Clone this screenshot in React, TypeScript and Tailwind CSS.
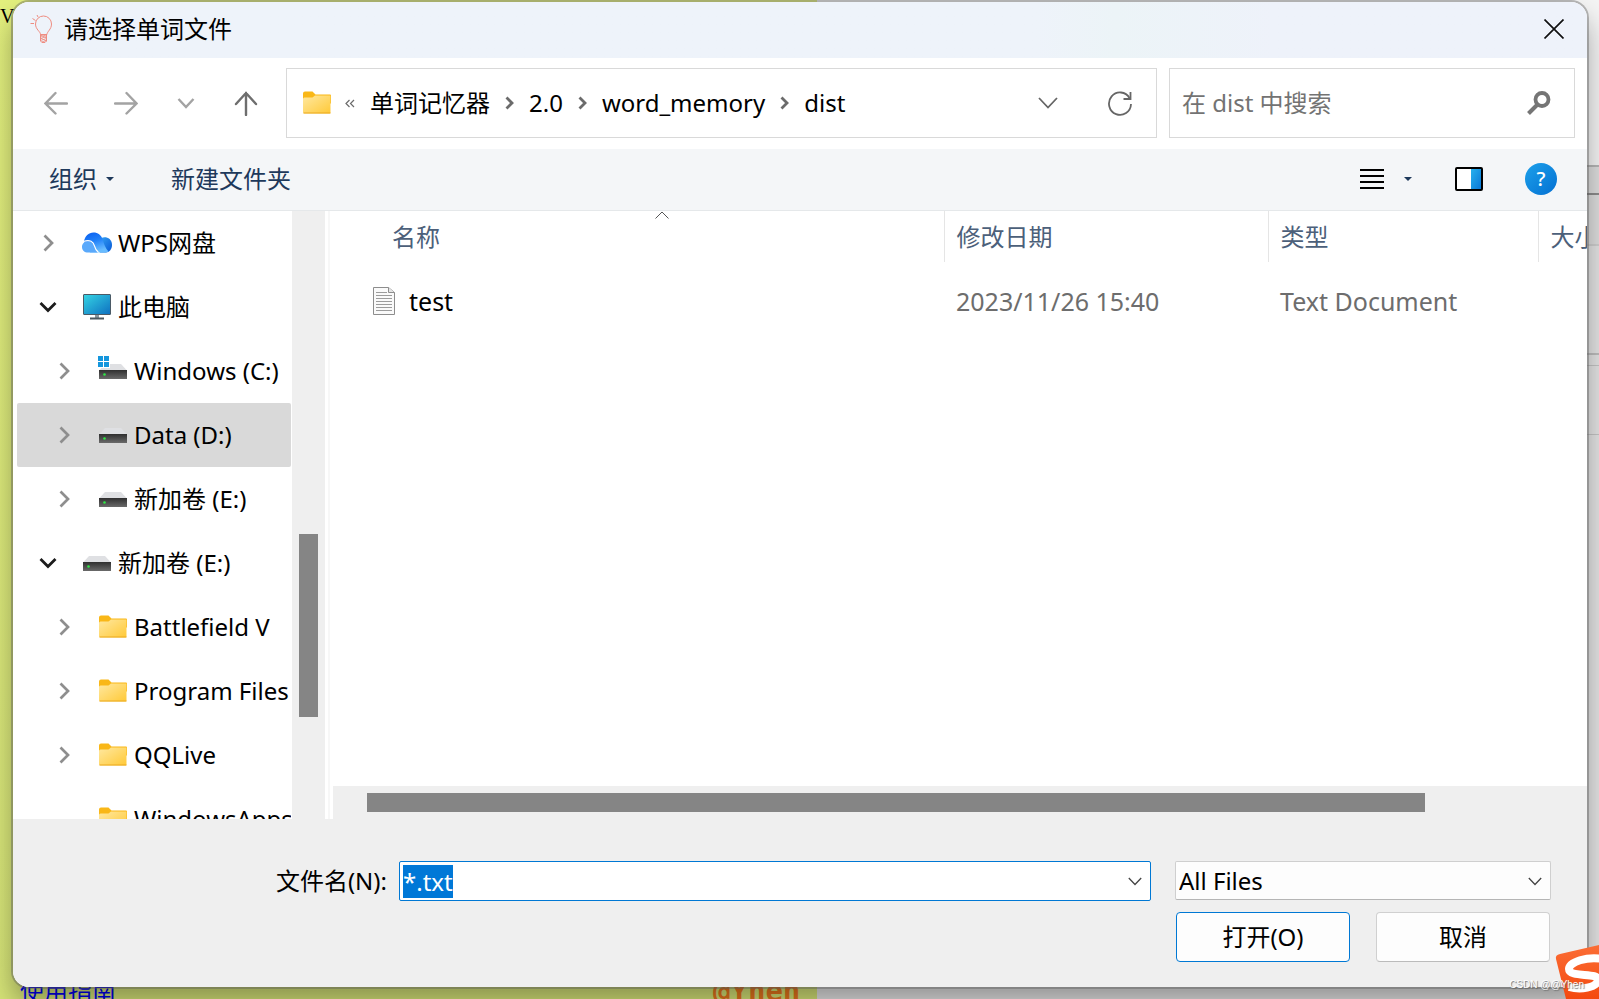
import { useEffect, useRef } from "react";
import type { ReactNode } from "react";

type TreeItem = {
  label: string;
  icon: ReactNode;
  nested?: boolean;
  open?: boolean;
  selected?: boolean;
  leaf?: boolean;
};

function BulbIcon() {
  return (
    <svg width="24" height="30" viewBox="0 0 24 30" fill="none" stroke="#ee8c80" strokeWidth="1">
      <path d="M10.5 20.5c0-3-5-5-5-10.500a8 8 0 0 1 16 0c0 5.500-4.500 7.500-4.500 10.500z" />
      <path d="M10.500 20.500h6v6.500l-1.500 1.500h-3l-1.500-1.500z" />
      <path d="M10.500 22.500l6-1.500M10.500 24.500l6-2M10.500 26.500l6-2M11.500 28l5-1.500M10.500 21l6 3M10.500 24l6 3" strokeWidth=".8" />
      <path d="M7 1l1 2M2.500 4.500l3 2M.5 9.500h3.500" />
    </svg>
  );
}

function FolderIcon() {
  return (
    <svg width="28" height="24" viewBox="0 0 28 24" className="shrink-0">
      <defs>
        <linearGradient id="folder" x1="0" y1="0" x2="1" y2="1">
          <stop offset="0" stopColor="#ffe8a0" />
          <stop offset="1" stopColor="#ffc937" />
        </linearGradient>
      </defs>
      <path d="M0 2.500a2 2 0 0 1 2-2h7.500l3 3H27a1 1 0 0 1 1 1v8H0z" fill="#f9b717" />
      <path d="M0 8a1.500 1.500 0 0 1 1.500-1.500h8l2.500-2H27.500v17a1 1 0 0 1-1 1h-25A1.500 1.500 0 0 1 0 21z" fill="url(#folder)" />
      <path d="M.5 22h27" stroke="#eaa920" />
    </svg>
  );
}

function DriveIcon({ system = false }: { system?: boolean }) {
  return (
    <svg width="28" height="24" viewBox="0 0 28 24" className="shrink-0 overflow-visible">
      <defs>
        <linearGradient id="drive" x1="0" y1="0" x2="0" y2="1">
          <stop offset="0" stopColor="#2f2f2f" />
          <stop offset="1" stopColor="#6a6a6a" />
        </linearGradient>
      </defs>
      <path d="M6 5h16l6 6.500H0z" fill="#dfe0e3" />
      <path d="M0 11h28v9H0z" fill="url(#drive)" />
      <circle cx="5.500" cy="15.500" r="1.300" fill="#2fe845" />
      {system && (
        <>
          <path d="M-2-4H11V9H-2z" fill="#fff" />
          <path d="M-1-3h5v5h-5zM5-3h5v5H5zM-1 3h5v5h-5zM5 3h5v5H5z" fill="#1496dd" />
        </>
      )}
    </svg>
  );
}

function ComputerIcon() {
  return (
    <svg width="28" height="28" viewBox="0 0 28 28" className="shrink-0">
      <defs>
        <linearGradient id="screen" x1="0" y1="0" x2="1" y2="1">
          <stop offset="0" stopColor="#35d5e4" />
          <stop offset="1" stopColor="#0e6fc0" />
        </linearGradient>
      </defs>
      <rect x=".5" y="1.500" width="27" height="20" rx=".5" fill="url(#screen)" stroke="#4b5a66" />
      <path d="M12 22h4v3h-4z" fill="#8a979f" />
      <path d="M7 24.500h14v2H7z" fill="#4c5860" />
    </svg>
  );
}

function CloudIcon() {
  return (
    <svg width="30" height="22" viewBox="0 0 30 22" className="-mx-px shrink-0">
      <defs>
        <linearGradient id="cloud" x1="0" y1="0" x2=".4" y2="1">
          <stop offset="0" stopColor="#0a5df0" />
          <stop offset=".5" stopColor="#2080f8" />
          <stop offset="1" stopColor="#68bcff" />
        </linearGradient>
        <linearGradient id="cloudBack" x1="0" y1="0" x2="1" y2="1">
          <stop offset="0" stopColor="#35a4f4" />
          <stop offset="1" stopColor="#0757d6" />
        </linearGradient>
      </defs>
      <path d="M17 8C20 3.500 30 4.500 30 13c0 4.500-3 7.500-6 7.500h-6z" fill="url(#cloudBack)" />
      <path d="M2 9.500C3 4 6.500.5 11.500.5c4.500 0 7.500 2.500 9 6.500 1.500 5 3 9.500 6 12.500-3 1.500-6 1-9 1H8z" fill="url(#cloud)" />
      <path d="M0 15c0-4 3-6 6.500-5.500 6 .5 6 7 9.500 11H6c-3.500 0-6-2-6-5.500z" fill="#5aa9fb" />
      <path d="M1.500 9.500C8 7 11.500 10 12.500 14c.8 3 2 5 4 6.500" fill="none" stroke="#fff" strokeWidth="1.100" />
    </svg>
  );
}

function TextFileIcon() {
  return (
    <svg width="22" height="30" viewBox="0 0 22 30" className="shrink-0">
      <path d="M.5.5h15l6 5v22H.5z" fill="#fafafa" stroke="#8d8d8d" />
      <path d="M15.500.5v5h6" fill="#e5e5e5" stroke="#8d8d8d" />
      <path d="M3 5.500h11M3 8.500h16M3 11.500h16M3 14.500h16M3 17.500h16M3 20.500h16M3 23.500h16" stroke="#9c9c9c" />
    </svg>
  );
}

function ThinChevron({ className }: { className?: string }) {
  return (
    <svg width="14" height="9" viewBox="0 0 14 9" className={className} fill="none" stroke="#444" strokeWidth="1.300">
      <path d="M.8 1l6.200 6.500L13.200 1" />
    </svg>
  );
}

function CrumbArrow() {
  return (
    <svg width="9" height="14" viewBox="0 0 9 14" className="shrink-0" fill="none" stroke="#6b6b6b" strokeWidth="2.800">
      <path d="M1.500 1.500L7 7l-5.500 5.500" />
    </svg>
  );
}

const tree: TreeItem[] = [
  { label: "WPS网盘", icon: <CloudIcon /> },
  { label: "此电脑", icon: <ComputerIcon />, open: true },
  { label: "Windows (C:)", icon: <DriveIcon system />, nested: true },
  { label: "Data (D:)", icon: <DriveIcon />, nested: true, selected: true },
  { label: "新加卷 (E:)", icon: <DriveIcon />, nested: true },
  { label: "新加卷 (E:)", icon: <DriveIcon />, open: true },
  { label: "Battlefield V", icon: <FolderIcon />, nested: true },
  { label: "Program Files", icon: <FolderIcon />, nested: true },
  { label: "QQLive", icon: <FolderIcon />, nested: true },
  { label: "WindowsApps", icon: <FolderIcon />, nested: true, leaf: true },
];

const crumbs = ["单词记忆器", "2.0", "word_memory", "dist"];

function TreeRow({ item }: { item: TreeItem }) {
  return (
    <li>
      <button
        type="button"
        className={`flex h-16 w-full items-center overflow-hidden rounded-xs whitespace-nowrap ${item.nested ? "pl-[37px]" : "pl-[21px]"} ${item.selected ? "bg-[#d9d9d9]" : ""}`}
      >
        <span className="mr-[25px] flex w-5 shrink-0 justify-center">
          {item.leaf ? null : item.open ? (
            <svg width="18" height="12" viewBox="0 0 18 12" fill="none" stroke="#1c1c1c" strokeWidth="2.800">
              <path d="M1.500 2L9 9.500 16.500 2" />
            </svg>
          ) : (
            <svg width="12" height="18" viewBox="0 0 12 18" fill="none" stroke="#8e8e8e" strokeWidth="2.700">
              <path d="M2.500 1.500L10 9l-7.500 7.500" />
            </svg>
          )}
        </span>
        {item.icon}
        <span className="ml-[7px]">{item.label}</span>
      </button>
    </li>
  );
}

function TitleBar() {
  return (
    <header className="flex h-14 shrink-0 items-center bg-linear-to-r from-[#eef3fa] from-65% via-[#ecf4f7] via-70% to-[#eef2fa] to-80% pr-[23px] pb-0.5 pl-[17px]">
      <BulbIcon />
      <h1 className="ml-2.5 flex-1">请选择单词文件</h1>
      <button type="button" aria-label="关闭">
        <svg width="20" height="20" viewBox="0 0 20 20" stroke="#111" strokeWidth="1.700">
          <path d="M.5.5l19 19M19.500.5l-19 19" />
        </svg>
      </button>
    </header>
  );
}

function NavBar() {
  return (
    <div className="flex h-[91px] shrink-0 items-center pr-3 pb-px pl-2">
      <button type="button" aria-label="后退" className="flex w-[70px] justify-center">
        <svg width="24" height="24" viewBox="0 0 24 24" fill="none" stroke="#a3a3a3" strokeWidth="2.400" strokeLinecap="round">
          <path d="M1.500 12.500H23M11.500 2L1.500 12.500l10 10" />
        </svg>
      </button>
      <button type="button" aria-label="前进" className="flex w-[70px] justify-center">
        <svg width="24" height="24" viewBox="0 0 24 24" fill="none" stroke="#a3a3a3" strokeWidth="2.400" strokeLinecap="round">
          <path d="M1 12.500h21.500M12.500 2l10 10.500-10 10" />
        </svg>
      </button>
      <button type="button" aria-label="最近位置" className="flex w-[50px] justify-center">
        <svg width="18" height="12" viewBox="0 0 18 12" fill="none" stroke="#a3a3a3" strokeWidth="2.400">
          <path d="M1.500 2L9 10l7.500-8" />
        </svg>
      </button>
      <button type="button" aria-label="上移" className="mr-[5px] flex w-[70px] justify-center">
        <svg width="24" height="26" viewBox="0 0 24 26" fill="none" stroke="#6e6e6e" strokeWidth="2.400" strokeLinecap="round">
          <path d="M12 3v22M2 14L12 3l10 11" />
        </svg>
      </button>

      <nav aria-label="路径" className="flex h-[70px] min-w-0 flex-1 items-center border border-[#d9d9d9] pl-4">
        <FolderIcon />
        <svg width="10" height="9" viewBox="0 0 10 9" className="mr-[15px] ml-3.5 shrink-0" fill="none" stroke="#6b6b6b" strokeWidth="1.200">
          <path d="M4.500 1L1 4.500 4.500 8M9 1L5.500 4.500 9 8" />
        </svg>
        <ol className="flex flex-1 items-center gap-[15px] whitespace-nowrap">
          {crumbs.map((name, i) => (
            <li key={name} className="flex items-center gap-[15px]">
              {i > 0 && <CrumbArrow />}
              <a href="#">{name}</a>
            </li>
          ))}
        </ol>
        <button type="button" aria-label="展开路径">
          <svg width="20" height="12" viewBox="0 0 20 12" fill="none" stroke="#666" strokeWidth="1.800">
            <path d="M1 1l9 9.500L19 1" />
          </svg>
        </button>
        <button type="button" aria-label="刷新" className="mr-6 ml-[50px]">
          <svg width="24" height="26" viewBox="0 0 24 26" fill="none" stroke="#666" strokeWidth="1.800">
            <path d="M21.500 8A11 11.200 0 1 0 23 14" />
            <path d="M22.500 2v7H15.500" />
          </svg>
        </button>
      </nav>

      <label className="ml-3 flex h-[70px] w-[406px] items-center border border-[#d9d9d9] pr-[23px] pl-3">
        <input
          type="search"
          aria-label="搜索"
          placeholder="在 dist 中搜索"
          className="min-w-0 flex-1 outline-none placeholder:text-[#737373]"
        />
        <svg width="24" height="24" viewBox="0 0 24 24" fill="none" stroke="#757575">
          <circle cx="15" cy="8.500" r="6.500" strokeWidth="3.800" />
          <path d="M11 13L1.500 22.500" strokeWidth="4" />
        </svg>
      </label>
    </div>
  );
}

function Toolbar() {
  return (
    <div className="flex h-[62px] shrink-0 items-center border-b border-[#e5e8ea] bg-[#f4f6f8] pr-[30px] pb-0.5 pl-9 text-[#1e395b]">
      <button type="button" className="flex items-center gap-[9px]">
        组织
        <svg width="8" height="4" viewBox="0 0 8 4" fill="#1e395b">
          <path d="M0 0h8L4 4z" />
        </svg>
      </button>
      <button type="button" className="ml-[57px]">新建文件夹</button>
      <div className="flex-1" />
      <button type="button" aria-label="视图" className="flex items-center gap-5">
        <svg width="24" height="20" viewBox="0 0 24 20" stroke="#000" strokeWidth="2">
          <path d="M0 1h24M0 7h24M0 13h24M0 19h24" />
        </svg>
        <svg width="8" height="4" viewBox="0 0 8 4" fill="#1e395b">
          <path d="M0 0h8L4 4z" />
        </svg>
      </button>
      <button type="button" aria-label="预览窗格" className="ml-[43px]">
        <svg width="28" height="24" viewBox="0 0 28 24">
          <defs>
            <linearGradient id="pane" x1="0" y1="0" x2="1" y2="1">
              <stop offset="0" stopColor="#27b2ee" />
              <stop offset="1" stopColor="#0873d5" />
            </linearGradient>
          </defs>
          <rect x="1" y="1" width="26" height="22" rx="1" fill="#fff" />
          <path d="M16 1h11v22H16z" fill="url(#pane)" />
          <rect x="1" y="1" width="26" height="22" rx="1" fill="none" stroke="#000" strokeWidth="2" />
        </svg>
      </button>
      <button type="button" aria-label="帮助" className="ml-[42px] flex size-8 items-center justify-center rounded-full bg-linear-to-br from-[#1da0ea] to-[#0670d2] text-xl font-medium text-white">
        ?
      </button>
    </div>
  );
}

function FileTable() {
  return (
    <table className="w-full table-fixed text-left whitespace-nowrap">
      <colgroup>
        <col />
        <col className="w-[324px]" />
        <col className="w-[270px]" />
        <col className="w-[49px]" />
      </colgroup>
      <thead className="text-[#4c607a]">
        <tr className="h-[51px]">
          <th className="relative border-r border-[#e5e5e5] pl-[59px] font-normal">
            名称
            <svg width="14" height="8" viewBox="0 0 14 8" className="absolute top-0 left-[322px]" fill="none" stroke="#555">
              <path d="M.5 7.500L7 1l6.500 6.500" />
            </svg>
          </th>
          <th className="border-r border-[#e5e5e5] pl-3 font-normal">修改日期</th>
          <th className="border-r border-[#e5e5e5] pl-3 font-normal">类型</th>
          <th className="overflow-hidden pl-3 font-normal">大小</th>
        </tr>
      </thead>
      <tbody className="text-[25px] text-[#6d6d6d]">
        <tr className="h-20">
          <td className="pl-10 text-black">
            <span className="flex items-center gap-3.5">
              <TextFileIcon />
              test
            </span>
          </td>
          <td className="pl-3">2023/11/26 15:40</td>
          <td className="pl-3">Text Document</td>
          <td />
        </tr>
      </tbody>
    </table>
  );
}

function Browser() {
  return (
    <main className="flex min-h-0 flex-1">
      <aside className="w-[279px] shrink-0 overflow-hidden">
        <ul className="pr-px pl-1">
          {tree.map((item, i) => (
            <TreeRow key={i} item={item} />
          ))}
        </ul>
      </aside>
      {/* vertical scrollbar of the tree */}
      <div className="flex w-[33px] shrink-0 justify-center bg-[#efefef] pt-[323px]">
        <div className="h-[183px] w-[19px] bg-[#858585]" />
      </div>
      <div className="mx-[3px] w-0.5 shrink-0 bg-[#f7f7f7]" />
      <section className="flex min-w-0 flex-1 flex-col">
        <div className="min-h-0 flex-1 overflow-hidden">
          <FileTable />
        </div>
        <div className="flex h-[33px] items-center bg-[#efefef] pr-[162px] pl-[34px]">
          <div className="h-[19px] flex-1 bg-[#858585]" />
        </div>
      </section>
    </main>
  );
}

function Footer() {
  const nameRef = useRef<HTMLInputElement>(null);

  useEffect(() => {
    nameRef.current?.focus();
    nameRef.current?.select();
  }, []);

  return (
    <footer className="flex h-[168px] shrink-0 flex-col gap-[11px] bg-[#efefef] pt-[42px] pr-9">
      <div className="flex h-10 items-start">
        <label htmlFor="filename" className="w-[386px] pr-3 text-right leading-10">
          文件名(N):
        </label>
        <div className="relative min-w-0 flex-1">
          <input
            id="filename"
            ref={nameRef}
            defaultValue="*.txt"
            className="h-10 w-full rounded-xs border border-[#0078d4] bg-white pr-10 pl-[3px] leading-8 outline-none selection:bg-[#0078d7] selection:text-white"
          />
          <ThinChevron className="pointer-events-none absolute top-4 right-[9px]" />
        </div>
        <div className="relative ml-6 w-[376px]">
          <select
            aria-label="文件类型"
            className="h-[39px] w-full appearance-none rounded-xs border border-[#cfcfcf] border-b-[#b5b5b5] bg-[#fdfdfd] pl-[3px]"
          >
            <option>All Files</option>
          </select>
          <ThinChevron className="pointer-events-none absolute top-4 right-[9px]" />
        </div>
      </div>
      <div className="flex justify-end gap-[26px] pr-px">
        <button type="button" className="h-[50px] w-[174px] rounded-sm border border-[#0078d4] bg-[#fdfdfd]">
          打开(O)
        </button>
        <button type="button" className="h-[50px] w-[174px] rounded-sm border border-[#d0d0d0] border-b-[#bbb] bg-[#fdfdfd]">
          取消
        </button>
      </div>
    </footer>
  );
}

// The windows behind the dialog, seen only along its edges
function Desktop() {
  return (
    <div className="absolute inset-0 flex">
      <div className="relative w-[817px] bg-linear-to-b from-[#e3f07e] to-[#d6e478]">
        <span className="absolute top-0.5 left-0 font-['Liberation_Serif',serif] text-xl">V</span>
        <a href="#" className="absolute -bottom-2 left-5 text-[#0000ee] underline">使用指南</a>
        <span className="absolute -bottom-3 left-[713px] font-['DejaVu_Sans_Mono',monospace] text-[29px] font-bold text-[#e8761c]">
          @Yhen
        </span>
      </div>
      <div className="flex flex-1 flex-col bg-[#e4e4e4]">
        <div className="h-[165px] bg-[#f4f4f4]" />
        <div className="h-7 border-t-2 border-[#b5b5b5] bg-[#dedede]" />
        <div className="h-[51px] border-t-2 border-[#8c8c8c] bg-[#dedede]" />
        <div className="h-[109px] border-t-2 border-[#cfcfcf]" />
        <div className="h-3 border-t-2 border-[#bdbdbd]" />
        <div className="h-[69px] border-t border-[#c4c4c4]" />
        <div className="flex-1 border-t border-[#c4c4c4]" />
      </div>
    </div>
  );
}

function SogouBadge() {
  return (
    <svg width="44" height="56" viewBox="0 0 44 56" className="absolute right-0 bottom-0">
      <defs>
        <linearGradient id="sogou" x1="0" y1="0" x2="0" y2="1">
          <stop offset="0" stopColor="#fb6d35" />
          <stop offset="1" stopColor="#f4490f" />
        </linearGradient>
      </defs>
      <path d="M5 11L44 2v54H11L1 16q-1-4 4-5z" fill="url(#sogou)" />
      <path d="M48 16C32 13 14 19 14 26c0 9 30 3 29 11-1 8-18 10-29 7" fill="none" stroke="#fff" strokeWidth="8" />
    </svg>
  );
}

export default function App() {
  return (
    <div className="relative flex h-screen overflow-hidden font-['Noto_Sans','Noto_Sans_CJK_SC',sans-serif] text-2xl text-black">
      <Desktop />
      <div className="relative mt-0.5 mr-3 mb-3 ml-[13px] flex min-w-0 flex-1 flex-col overflow-hidden rounded-2xl bg-white shadow-[0_0_0_2px_rgba(90,90,90,0.4),0_16px_28px_rgba(0,0,0,0.35)]">
        <TitleBar />
        <NavBar />
        <Toolbar />
        <Browser />
        <Footer />
      </div>
      <SogouBadge />
      <p className="absolute right-[15px] bottom-1.5 font-['Liberation_Sans',sans-serif] text-[10px] leading-4 text-white [text-shadow:1px_1px_1px_#666]">
        CSDN @@Yhen
      </p>
    </div>
  );
}
